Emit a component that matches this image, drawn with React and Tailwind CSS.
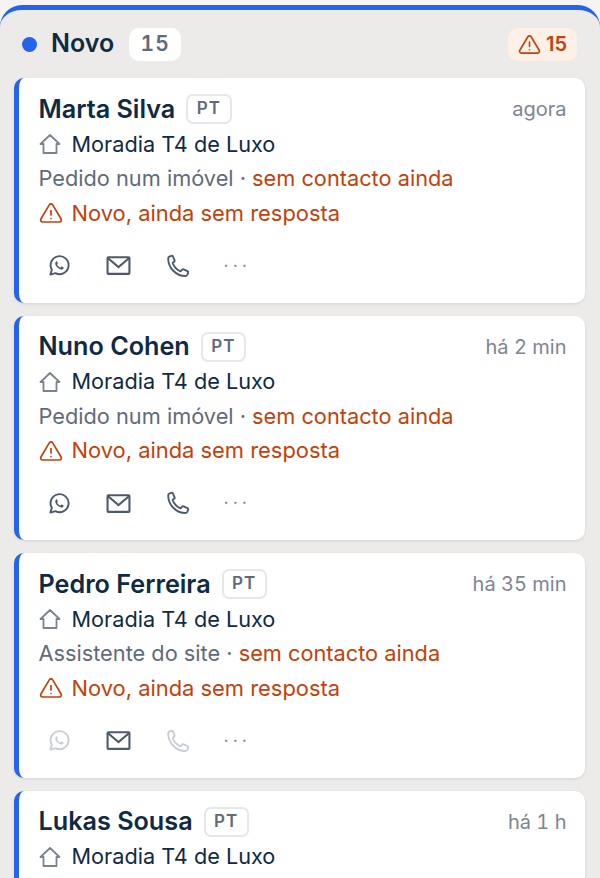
import React from "react";

const leads = [
  { name: "Marta Silva", time: "agora", source: "Pedido num imóvel", noPhone: false },
  { name: "Nuno Cohen", time: "há 2 min", source: "Pedido num imóvel", noPhone: false },
  { name: "Pedro Ferreira", time: "há 35 min", source: "Assistente do site", noPhone: true },
  { name: "Lukas Sousa", time: "há 1 h", source: "Pedido num imóvel", noPhone: false },
];

function AlertIcon({ className }) {
  return (
    <svg viewBox="0 0 24 24" fill="none" stroke="currentColor" strokeWidth="1.7" strokeLinecap="round" strokeLinejoin="round" className={className}>
      <path d="M10.3 3.9 1.9 18a2 2 0 0 0 1.7 3h16.8a2 2 0 0 0 1.7-3L13.7 3.9a2 2 0 0 0-3.4 0z" />
      <path d="M12 9.5v4.5" />
      <path d="M12 17.5h.01" />
    </svg>
  );
}

function HomeIcon() {
  return (
    <svg viewBox="0 0 24 24" fill="none" stroke="currentColor" strokeWidth="1.8" strokeLinejoin="round" className="w-[24px] h-[24px] -ml-[1px] text-[#7a838f] shrink-0">
      <path d="M2.5 12 12 3l9.5 9H18.5v9h-13v-9z" />
    </svg>
  );
}

function WhatsappIcon({ className }) {
  return (
    <svg viewBox="0 0 24 24" fill="none" stroke="currentColor" strokeWidth="2" strokeLinejoin="round" className={className}>
      <path d="M2.500 21.500 4 16.400A9.400 9.400 0 1 1 7.800 20z" />
      <path
        fill="currentColor"
        stroke="none"
        d="M9.3 7.6c-.3 0-.7.1-1 .5-.4.5-.9 1.200-.7 2.300.3 1.300 1 2.500 2.300 3.800 1.500 1.400 2.900 2 4 2.100 1 .1 1.900-.5 2.200-1.200.2-.5.200-1 .1-1.200l-1.900-.9c-.2-.1-.4 0-.5.1l-.7.9c-.1.100-.3.200-.5.100-.9-.4-2.300-1.500-3-2.900-.1-.2 0-.3.100-.4l.5-.7c.1-.2.100-.3 0-.5l-.8-1.900c-.1-.2-.2-.2-.4-.2z"
      />
    </svg>
  );
}

function MailIcon() {
  return (
    <svg viewBox="0 0 24 24" fill="none" stroke="currentColor" strokeWidth="2" strokeLinejoin="miter" className="w-[25px] h-[25px] text-[#4b5b6b]">
      <rect x="1.500" y="4" width="21" height="16" rx="0.8" />
      <path d="m2 5 10 8.500L22 5" />
    </svg>
  );
}

function PhoneIcon({ className }) {
  return (
    <svg viewBox="0 0 24 24" fill="none" stroke="currentColor" strokeWidth="1.900" strokeLinejoin="round" className={className}>
      <path d="M2.200 4.500c0-1 .6-1.800 1.500-2.100l2-.6c.6-.1 1.100.2 1.300.7l1.600 3.800c.2.500.1 1-.3 1.300L6.600 9c1.200 3.300 4.700 7 8 8.400l1.500-1.700c.4-.4.900-.5 1.400-.3l4 1.800c.5.200.8.800.6 1.400l-.6 1.900c-.3.900-1.100 1.500-2.100 1.500C10 22 2.200 13.900 2.200 4.500z" />
    </svg>
  );
}

function LeadCard({ lead }) {
  const faded = lead.noPhone;
  return (
    <div className="rounded-[10px] bg-white border-l-[5px] border-[#2563eb] pl-[19.500px] pr-[18.500px] pt-[13px] pb-[21px] shadow-[0_1px_3px_rgba(0,0,0,0.1)] shrink-0">
      <div className="flex items-center justify-between h-[36px]">
        <div className="flex items-center gap-[11px]">
          <span className="pt-[1px] text-[25.200px] font-semibold text-[#0f2a43] leading-none">{lead.name}</span>
          <span className="h-[30px] px-[8.500px] flex items-center rounded-[7px] border-2 border-[#e5e7eb] text-[17px] font-semibold text-[#5f6b7a] tracking-[1px]">
            PT
          </span>
        </div>
        <span className="text-[20px] tabular-nums text-[#7c8694]">{lead.time}</span>
      </div>
      <div className="flex items-center gap-[10px] h-[34.500px] text-[21.700px] text-[#0f2a43]">
        <HomeIcon />
        <span>Moradia T4 de Luxo</span>
      </div>
      <div className="flex items-center h-[34.500px] text-[21.750px] text-[#5f6b7a]">
        {lead.source}
        <span>&nbsp;·&nbsp;</span>
        <span className="text-[#c2410c]">sem contacto ainda</span>
      </div>
      <div className="flex items-center gap-[9px] h-[34.500px] text-[21.900px] text-[#c2410c]">
        <AlertIcon className="w-[24px] h-[24px] shrink-0" />
        <span>Novo, ainda sem resposta</span>
      </div>
      <div className="flex items-center gap-[35px] mt-[19px] pl-[9px] h-[32px]">
        <WhatsappIcon className={`w-[23px] h-[23px] ${faded ? "text-[#c9ced5]" : "text-[#4b5b6b]"}`} />
        <MailIcon />
        <PhoneIcon className={`w-[24px] h-[24px] ${faded ? "text-[#c9ced5]" : "text-[#4b5b6b]"}`} />
        <span className="-ml-[1px] text-[18px] leading-none tracking-[4px] text-[#7c8694]">···</span>
      </div>
    </div>
  );
}

export default function App() {
  return (
    <div className="h-[878px] overflow-hidden bg-[#f5f4f2] pt-[5px]" style={{ fontFamily: "Inter, sans-serif" }}>
      <div className="h-full rounded-t-[22px] border-t-[5px] border-[#2563eb] bg-[#ecebe9] pl-[14px] pr-[15px] flex flex-col">
        <div className="flex items-center justify-between h-[68px] shrink-0 pl-[8px] pr-[8px]">
          <div className="flex items-center">
            <span className="w-[15px] h-[15px] rounded-full bg-[#2563eb]" />
            <span className="ml-[14px] text-[25px] font-semibold text-[#0f2a43]">Novo</span>
            <span className="ml-[15px] h-[33px] w-[52px] flex items-center justify-center rounded-[10px] bg-white text-[21px] tabular-nums font-semibold text-[#5f6b7a] tracking-[1px]">
              15
            </span>
          </div>
          <div className="flex items-center gap-[5px] h-[33px] px-[10px] rounded-[10px] bg-[#fdf0e6] text-[#c2410c] text-[20px] font-semibold">
            <AlertIcon className="w-[23px] h-[23px]" />
            15
          </div>
        </div>
        <div className="flex flex-col gap-[13px]">
          {leads.map((lead) => (
            <LeadCard key={lead.name} lead={lead} />
          ))}
        </div>
      </div>
    </div>
  );
}
